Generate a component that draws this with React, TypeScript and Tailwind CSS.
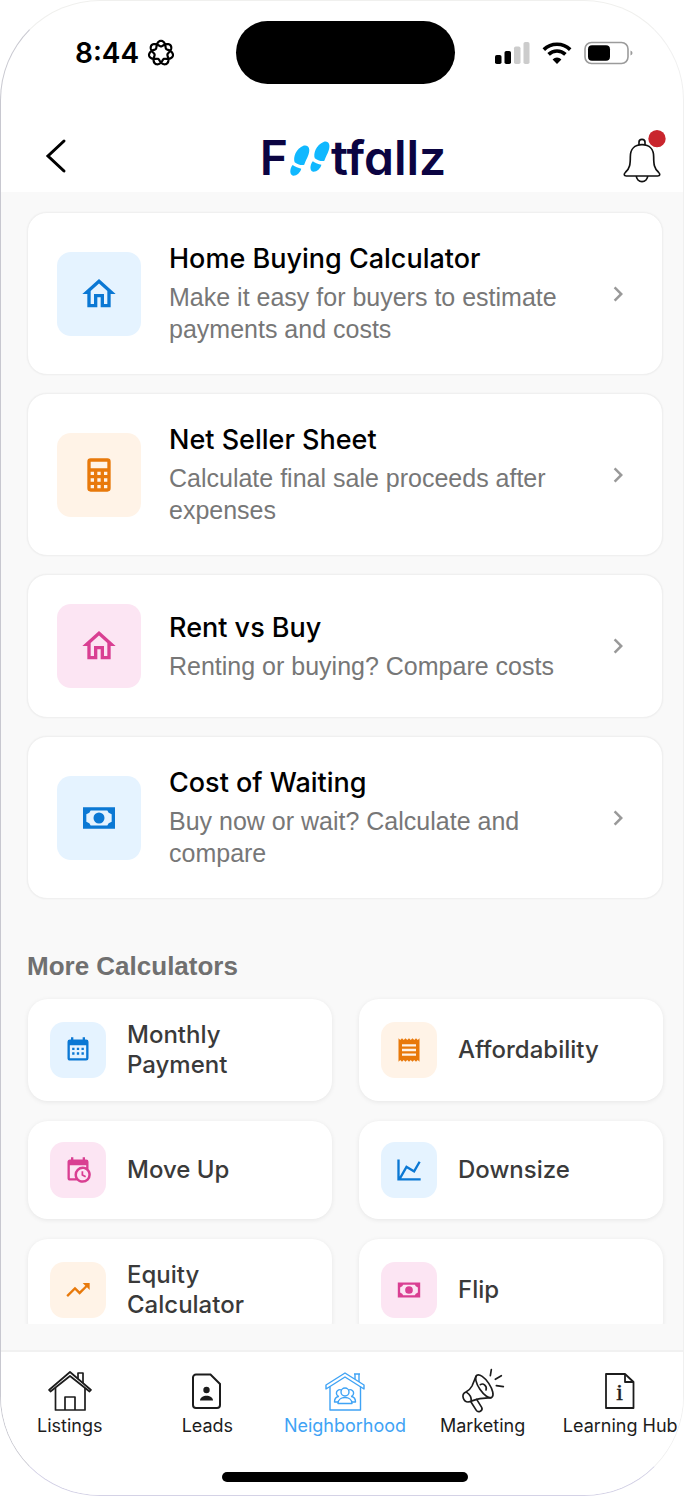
import React from "react";
import { MdChevronRight, MdOutlineHome, MdReceipt, MdTrendingUp } from "react-icons/md";

type Tone = "blue" | "orange" | "pink";

interface CalculatorItem {
  title: string;
  description?: string;
  tone: Tone;
  icon: React.ReactNode;
}

const toneStyles: Record<Tone, string> = {
  blue: "bg-[#e5f3ff] text-[#0b78d4]",
  orange: "bg-[#fff3e7] text-[#e8790b]",
  pink: "bg-[#fce5f3] text-[#d93f92]",
};

const GlyphIcon: React.FC<{ d: string; className: string }> = ({ d, className }) => (
  <svg viewBox="0 0 24 24" className={className} fill="currentColor" fillRule="evenodd" aria-hidden="true">
    <path d={d} />
  </svg>
);

const CALCULATOR =
  "M7,2H17A2,2 0 0,1 19,4V20A2,2 0 0,1 17,22H7A2,2 0 0,1 5,20V4A2,2 0 0,1 7,2M7,4V8H17V4H7M7,10V12H9V10H7M11,10V12H13V10H11M15,10V12H17V10H15M7,14V16H9V14H7M11,14V16H13V14H11M15,14V16H17V14H15M7,18V20H9V18H7M11,18V20H13V18H11M15,18V20H17V18H15Z";
const CASH =
  "M2.4,5.5H21.6V18.5H2.4V5.5M7,7.5L6.2,8.8L4.4,9.8V14.2L6.2,15.2L7,16.5H17L17.8,15.2L19.600,14.2V9.8L17.8,8.8L17,7.5H7M12,8.7A3.3,3.3 0 0,1 12,15.3A3.3,3.3 0 0,1 12,8.7Z";
const CALENDAR =
  "M9,10V12H7V10H9M13,10V12H11V10H13M17,10V12H15V10H17M19,3A2,2 0 0,1 21,5V19A2,2 0 0,1 19,21H5C3.89,21 3,20.1 3,19V5A2,2 0 0,1 5,3H6V1H8V3H16V1H18V3H19M19,19V8H5V19H19M9,14V16H7V14H9M13,14V16H11V14H13M17,14V16H15V14H17Z";
const CALENDAR_CLOCK =
  "M15,13H16.5V15.82L18.94,17.23L18.19,18.53L15,16.69V13M19,8H5V19H9.67C9.24,18.09 9,17.07 9,16A7,7 0 0,1 16,9C17.07,9 18.09,9.24 19,9.67V8M5,21C3.89,21 3,20.1 3,19V5C3,3.89 3.89,3 5,3H6V1H8V3H16V1H18V3H19A2,2 0 0,1 21,5V11.1C22.24,12.36 23,14.09 23,16A7,7 0 0,1 16,23C14.09,23 12.36,22.24 11.1,21H5M16,11.15A4.85,4.85 0 0,0 11.15,16C11.15,18.68 13.32,20.85 16,20.85A4.85,4.85 0 0,0 20.85,16C20.85,13.32 18.68,11.15 16,11.15Z";
const CHART_LINE =
  "M16,11.78L20.24,4.45L21.97,5.45L16.74,14.5L10.23,10.75L5.46,19H22V21H2V3H4V17.54L9.5,8L16,11.78Z";

const featured: CalculatorItem[] = [
  {
    title: "Home Buying Calculator",
    description: "Make it easy for buyers to estimate payments and costs",
    tone: "blue",
    icon: <MdOutlineHome className="size-10" />,
  },
  {
    title: "Net Seller Sheet",
    description: "Calculate final sale proceeds after expenses",
    tone: "orange",
    icon: <GlyphIcon d={CALCULATOR} className="size-10" />,
  },
  {
    title: "Rent vs Buy",
    description: "Renting or buying? Compare costs",
    tone: "pink",
    icon: <MdOutlineHome className="size-10" />,
  },
  {
    title: "Cost of Waiting",
    description: "Buy now or wait? Calculate and compare",
    tone: "blue",
    icon: <GlyphIcon d={CASH} className="size-10" />,
  },
];

const more: CalculatorItem[] = [
  { title: "Monthly Payment", tone: "blue", icon: <GlyphIcon d={CALENDAR} className="size-7" /> },
  { title: "Affordability", tone: "orange", icon: <MdReceipt className="size-7" /> },
  { title: "Move Up", tone: "pink", icon: <GlyphIcon d={CALENDAR_CLOCK} className="size-7" /> },
  { title: "Downsize", tone: "blue", icon: <GlyphIcon d={CHART_LINE} className="size-7" /> },
  { title: "Equity Calculator", tone: "orange", icon: <MdTrendingUp className="size-7" /> },
  { title: "Flip", tone: "pink", icon: <GlyphIcon d={CASH} className="size-7" /> },
];

// Seven-lobed rosette, closed after two turns
const rosette = Array.from({ length: 241 }, (_, i) => {
  const t = (i / 240) * Math.PI * 4;
  const r = 9.4 + 2.8 * Math.cos(3.5 * t);
  return `${i ? "L" : "M"}${(14 + r * Math.sin(t)).toFixed(2)} ${(14 - r * Math.cos(t)).toFixed(2)}`;
}).join("");

const StatusBar = () => (
  <div className="grid grid-cols-[1fr_219px_1fr] items-center pt-5 pl-[6px]">
    <div className="flex items-center gap-2 pl-[68px]">
      <span className="text-[28px] leading-8 font-semibold text-black">8:44</span>
      <svg viewBox="0 0 28 28" className="size-7" fill="none" stroke="#000" strokeWidth="2.200" aria-hidden="true">
        <path d={rosette} />
      </svg>
    </div>
    <div className="h-[63px] rounded-full bg-black" />
    <div className="flex items-center gap-3 pl-10">
      <svg viewBox="0 0 35 22" className="h-[22px] w-[35px]" aria-hidden="true">
        <rect x="0" y="13" width="6.5" height="9" rx="1.8" fill="#000" />
        <rect x="9.5" y="9" width="6.5" height="13" rx="1.8" fill="#000" />
        <rect x="19" y="4.500" width="6.5" height="17.500" rx="1.8" fill="#ccc" />
        <rect x="28.500" y="0" width="6" height="22" rx="1.8" fill="#ccc" />
      </svg>
      <svg viewBox="0 0 30 22" className="h-[22px] w-[30px]" aria-hidden="true">
        <g fill="none" stroke="#000" strokeWidth="3.600">
          <path d="M1.800 7.600 A19 19 0 0 1 28.200 7.600" />
          <path d="M6.600 12.400 A12.200 12.200 0 0 1 23.400 12.400" />
        </g>
        <path d="M15 22 L10.600 17.400 A6.200 6.200 0 0 1 19.400 17.400 Z" fill="#000" />
      </svg>
      <svg viewBox="0 0 49 24" className="h-6 w-[49px]" aria-hidden="true">
        <rect x="1" y="1.500" width="43" height="21" rx="6.500" fill="none" stroke="#9b9b9b" strokeWidth="1.600" />
        <rect x="4" y="4.200" width="22" height="15.600" rx="4" fill="#000" />
        <path d="M46.500 9.500 q2 .8 2 2.500 t-2 2.500z" fill="#9b9b9b" />
      </svg>
    </div>
  </div>
);

const Logo = () => (
  <h1 className="flex items-center pt-1 text-[48px] leading-[50px] font-semibold text-[#0b0442]" aria-label="Footfallz">
    <span>F</span>
    <svg viewBox="0 0 128 112" className="h-[37px] w-[43px]" fill="#10b8ff" aria-hidden="true">
      <path d="M47 17 C62 14 67 28 61 44 C57 56 52 62 48 75 C40 78 25 72 19 67 C14 54 22 26 47 17Z" />
      <path d="M13 76 C21 81 30 85 39 87 C36 99 25 109 14 108 C4 106 3 88 13 76Z" />
      <path d="M108 5 C123 2 128 16 122 32 C118 44 113 50 109 63 C101 66 86 60 80 55 C75 42 83 14 108 5Z" />
      <path d="M74 64 C82 69 91 73 100 75 C97 87 86 97 75 96 C65 94 64 76 74 64Z" />
    </svg>
    <span className="[font-feature-settings:'cv11']">tfallz</span>
  </h1>
);

const Header = () => (
  <header className="grid grid-cols-[1fr_auto_1fr] items-center pt-[22px] pb-2 pl-[22px]">
    <button type="button" aria-label="Back" className="w-fit pl-[22px]">
      <svg viewBox="0 0 22 36" className="h-9 w-[22px]" fill="none" stroke="#000" strokeWidth="3" strokeLinecap="round" aria-hidden="true">
        <path d="M19 3 L3 18 L19 33" />
      </svg>
    </button>
    <Logo />
    <button type="button" aria-label="Notifications" className="justify-self-end pr-4">
      <svg viewBox="0 0 132 164" className="h-14 w-[44px]" fill="none" stroke="#111" strokeWidth="5" strokeLinejoin="round" aria-hidden="true">
        <path d="M48 50 V40 a9 8 0 0 1 18 0 V50" />
        <path d="M57 48 C34 48 22 63 22 84 C22 108 20 120 8 130 C1 137 3 142 10 142 H104 C111 142 113 137 106 130 C94 120 92 108 92 84 C92 63 80 48 57 48Z" />
        <path d="M40 142 a17 17 0 0 0 34 0" />
        <circle cx="102" cy="30" r="26" fill="#c9252d" stroke="none" />
      </svg>
    </button>
  </header>
);

const FeaturedCard: React.FC<{ item: CalculatorItem }> = ({ item }) => (
  <button
    type="button"
    className="flex w-full items-center gap-7 rounded-[20px] border border-[#f0f0f0] bg-white p-[29px] text-left shadow-[0_0_2px_rgba(0,0,0,0.06)]"
  >
    <span className={`flex size-[84px] shrink-0 items-center justify-center rounded-[14px] ${toneStyles[item.tone]}`}>
      {item.icon}
    </span>
    <span className="flex flex-1 flex-col gap-[5px]">
      <span className="text-[27px] leading-[34px] font-medium text-black">{item.title}</span>
      <span className="font-['Liberation_Sans',sans-serif] text-[25px] leading-8 text-[#777]">{item.description}</span>
    </span>
    <MdChevronRight className="size-[30px] shrink-0 text-[#999]" />
  </button>
);

const SmallCard: React.FC<{ item: CalculatorItem }> = ({ item }) => (
  <button
    type="button"
    className="flex items-center gap-[21px] rounded-[20px] bg-white px-[22px] py-[21px] text-left shadow-[0_1px_5px_rgba(0,0,0,0.08)]"
  >
    <span className={`flex size-14 shrink-0 items-center justify-center rounded-[14px] ${toneStyles[item.tone]}`}>
      {item.icon}
    </span>
    <span className="text-[24px] leading-[30px] font-medium text-[#3a3a3a]">{item.title}</span>
  </button>
);

const ListingsIcon = () => (
  <svg viewBox="0 0 46 42" className="h-[42px] w-[46px]" fill="none" stroke="currentColor" strokeWidth="1.700" strokeLinejoin="round" aria-hidden="true">
    <path d="M2 20 L23 2 L44 20 L42.500 21.500 L23 6 L3.500 21.500Z" />
    <path d="M8.500 18 V40 H38 V18" />
    <path d="M18 40 V27 H28 V40" />
    <path d="M31 8.500 V3 H36 V13" />
  </svg>
);

const LeadsIcon = () => (
  <svg viewBox="0 0 32 42" className="h-[42px] w-8" fill="none" stroke="currentColor" strokeWidth="2" aria-hidden="true">
    <path d="M5 4.500 H19.500 L29 14 V35 a3 3 0 0 1 -3 3 H5 a3 3 0 0 1 -3 -3 V7.500 a3 3 0 0 1 3 -3Z" />
    <circle cx="15.500" cy="20" r="3.200" fill="currentColor" stroke="none" />
    <path d="M9 30.500 C9 24 22 24 22 30.500Z" fill="currentColor" stroke="none" />
  </svg>
);

const NeighborhoodIcon = () => (
  <svg viewBox="0 0 42 42" className="size-[42px]" fill="none" stroke="currentColor" strokeWidth="1.400" strokeLinejoin="round" aria-hidden="true">
    <path d="M2 15 L21 3 L40 15 V19 L21 7 L2 19Z" />
    <path d="M6 16.500 V40 H36.500 V16.500" />
    <path d="M31 9 V4 H35 V12 M30 4 H36" />
    <circle cx="21" cy="22" r="4" />
    <path d="M17.500 20 a3.500 3.500 0 1 0 -2.500 6.500 M24.500 20 a3.500 3.500 0 1 1 2.500 6.500" />
    <path d="M14 33.500 C14 25.500 28 25.500 28 33.500Z" />
    <path d="M14 32 H10.500 C10.500 29 12 27 14.500 26.500 M28 32 H31.500 C31.500 29 30 27 27.500 26.500" />
  </svg>
);

const MarketingIcon = () => (
  <svg viewBox="0 0 138 138" className="size-[46px]" fill="none" stroke="currentColor" strokeWidth="5" strokeLinecap="round" strokeLinejoin="round" aria-hidden="true">
    <ellipse cx="73" cy="55" rx="16" ry="40" transform="rotate(-34 73 55)" />
    <path d="M48 25 L36 54 C29 68 22 70 14 74 C4 82 10 102 24 102 C34 101 44 94 60 92 L93 89" />
    <path d="M20 73 C28 78 34 88 34 98" />
    <path d="M33 102 L49 127 C55 136 70 128 65 118 L50 94" />
    <path d="M61 50 C70 44 82 54 78 66" />
    <path d="M94 5 L91 23 M124 23 L106 34 M109 53 L130 56" />
  </svg>
);

const LearningIcon = () => (
  <svg viewBox="0 0 32 42" className="h-[42px] w-8" fill="none" stroke="currentColor" strokeWidth="1.800" strokeLinejoin="round" aria-hidden="true">
    <path d="M2 4 H21 L29.500 12 V38 H2Z" />
    <path d="M21 4 V12 H29.500" />
    <text x="15.500" y="30" textAnchor="middle" fontSize="24" fontFamily="Liberation Serif, serif" fill="currentColor" stroke="currentColor" strokeWidth="0.500">
      i
    </text>
  </svg>
);

const tabs = [
  { label: "Listings", icon: <ListingsIcon /> },
  { label: "Leads", icon: <LeadsIcon /> },
  { label: "Neighborhood", icon: <NeighborhoodIcon />, active: true },
  { label: "Marketing", icon: <MarketingIcon /> },
  { label: "Learning Hub", icon: <LearningIcon /> },
];

const TabBar = () => (
  <nav className="-mr-[6px] border-t-2 border-[#f1f1f1] bg-white pt-4">
    <ul className="grid grid-cols-5">
      {tabs.map((tab) => (
        <li key={tab.label}>
          <a
            href="#"
            aria-current={tab.active ? "page" : undefined}
            className={`flex flex-col items-center whitespace-nowrap ${tab.active ? "text-[#3fa3f5]" : "text-[#1c1c1c]"}`}
          >
            <span className="flex h-[46px] items-center">{tab.icon}</span>
            <span className="text-[18px] leading-6">{tab.label}</span>
          </a>
        </li>
      ))}
    </ul>
    <div className="mx-auto mt-[34px] mb-[13px] h-[10px] w-[246px] rounded-full bg-black" />
  </nav>
);

const App: React.FC = () => (
  <div className="h-screen bg-white pb-[10px] font-[Inter,sans-serif]">
    <div className="flex h-full flex-col overflow-hidden rounded-[100px] border border-t-[#f0f0ee] border-r-[#f0f0f0] border-b-[#d4d2e6] border-l-[#c8c8d0] bg-white">
      <StatusBar />
      <div className="mt-[22px]">
        <Header />
      </div>
      <div className="flex min-h-0 flex-1 flex-col bg-[#f9f9f9] pb-[26px]">
        <main className="min-h-0 flex-1 overflow-hidden px-[26px] pt-5 pr-5">
          <section className="flex flex-col gap-[18px]">
            {featured.map((item) => (
              <FeaturedCard key={item.title} item={item} />
            ))}
          </section>
          <h2 className="mt-[51px] font-['Liberation_Sans',sans-serif] text-[26px] leading-8 font-bold text-[#707070]">
            More Calculators
          </h2>
          <section className="mt-[17px] grid grid-cols-2 gap-x-[27px] gap-y-5 pl-px">
            {more.map((item) => (
              <SmallCard key={item.title} item={item} />
            ))}
          </section>
        </main>
      </div>
      <TabBar />
    </div>
  </div>
);

export default App;
